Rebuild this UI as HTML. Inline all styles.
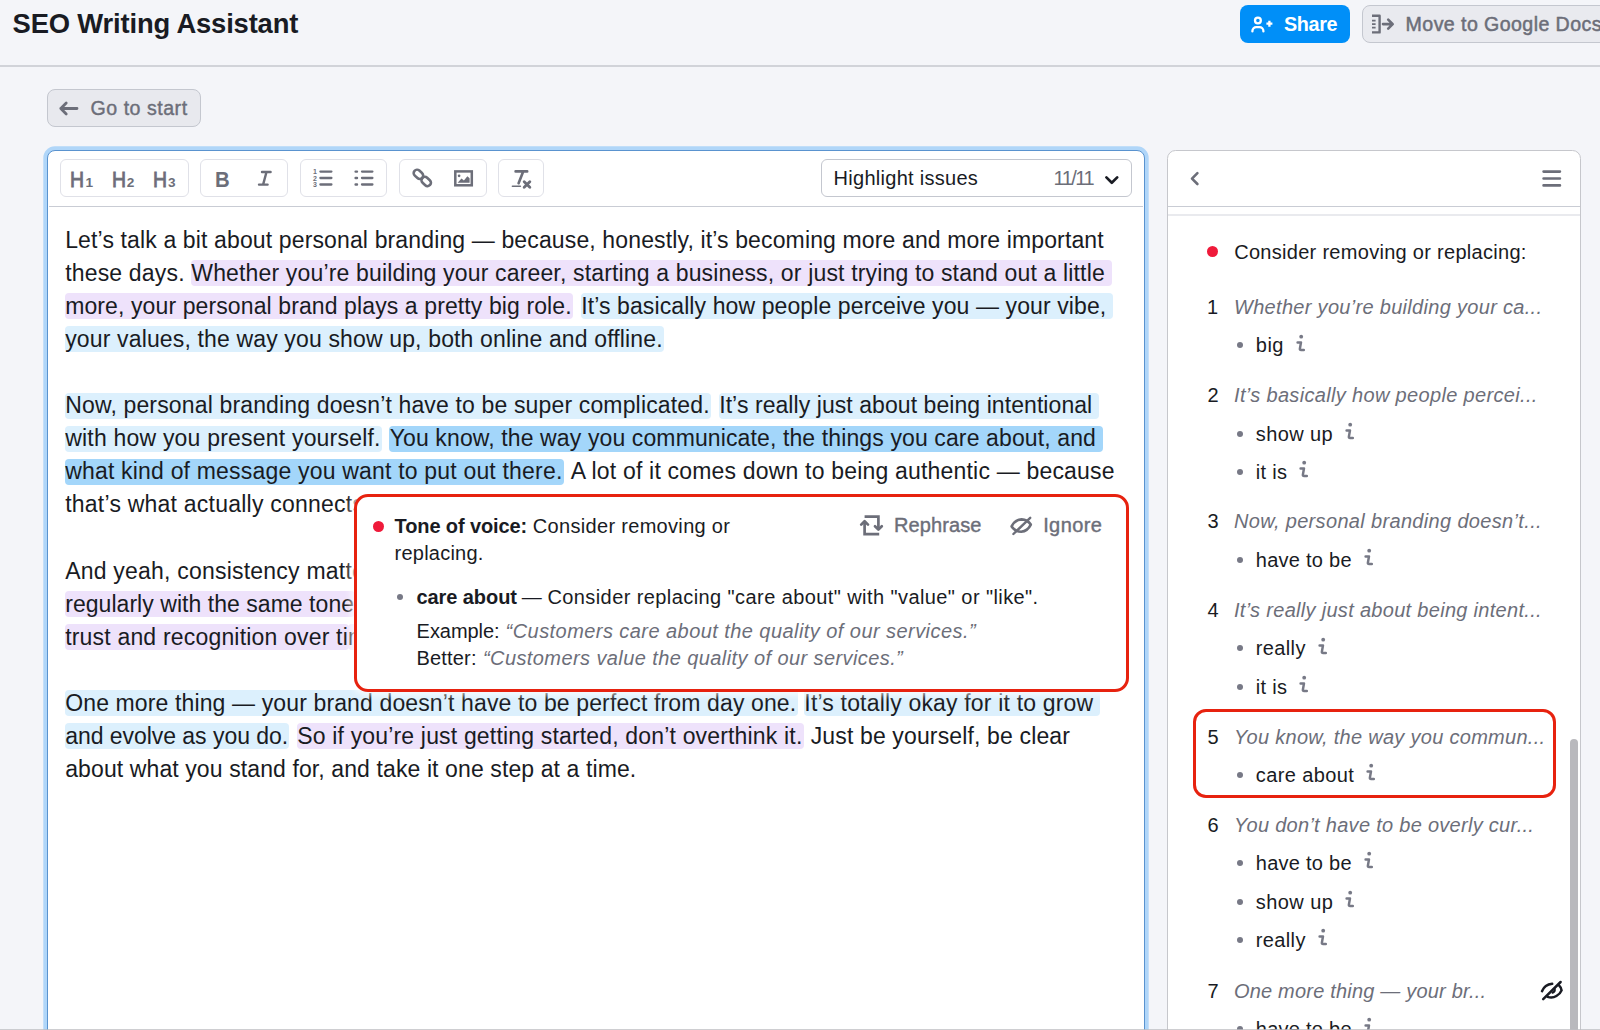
<!DOCTYPE html>
<html>
<head>
<meta charset="utf-8">
<title>SEO Writing Assistant</title>
<style>
*{box-sizing:border-box;margin:0;padding:0}
html,body{width:1600px;height:1030px;overflow:hidden}
body{background:#f4f5f9;font-family:"Liberation Sans",sans-serif;color:#191b23;position:relative}
.abs{position:absolute}
svg{position:absolute;overflow:visible}
.t{position:absolute;white-space:pre}
.g{color:#6c6e79}
.med{-webkit-text-stroke:0.5px currentColor}
#hline{left:0;top:65.4px;width:1600px;height:1.25px;background:#d1d3d9}
#share{left:1240px;top:4.7px;width:110.2px;height:38.5px;background:#008ff8;border-radius:8px}
#move{left:1361.6px;top:4.7px;width:260px;height:38.5px;background:#e9eaef;border:1.37px solid #c4c7cf;border-radius:8px}
#gostart{left:47.4px;top:89.2px;width:153.2px;height:38px;background:#e8e9ee;border:1.37px solid #c4c7cf;border-radius:8px}
#editor{left:46.8px;top:149.5px;width:1098.2px;height:900px;background:#fff;border:1.4px solid #5a93cf;border-radius:8px;box-shadow:0 0 0 3.7px #b0d6f9}
.tg{position:absolute;top:159.4px;height:37.9px;border:1.37px solid #e0e1e8;border-radius:6px;background:#fff}
#tbline{left:48.6px;top:206px;width:1094.7px;height:1.4px;background:#c9ccd4}
#panel{left:1166.8px;top:149.7px;width:414.2px;height:900px;background:#fff;border:1.37px solid #c6c7cc;border-radius:8.5px}
#pline1{left:1168.2px;top:206px;width:411.4px;height:1.4px;background:#c9ccd4}
#pline2{left:1168.2px;top:214.4px;width:411.4px;height:1.2px;background:#e9eaee}
#edtext{left:0;top:0;width:1143px;height:1030px;overflow:hidden}
.ln{position:absolute;left:65.2px;height:33px;line-height:33px;font-size:23px;white-space:pre;color:#191b23}
.ln .p,.ln .b,.ln .a{position:relative;z-index:0}
.ln .p::before,.ln .b::before,.ln .a::before{content:"";position:absolute;z-index:-1;left:-0.4px;right:-1.2px;top:0.4px;height:26.1px;border-radius:4px}
.ln .p::before{background:#eee2fb}
.ln .b::before{background:#dcf0fd}
.ln .a::before{background:#a3d6fa}
.ln .e::before{right:-7px}
#popup{left:353.8px;top:493.9px;width:775.7px;height:198.4px;background:#fff;border:3px solid #e7220f;border-radius:14px;box-shadow:0 0 7px 2.5px rgba(255,255,255,.8)}
#sel{left:1192.7px;top:709.2px;width:363px;height:89.2px;border:3px solid #e7220f;border-radius:13px}
#scroll{left:1570.2px;top:739px;width:7.8px;height:320px;background:#b9b9bd;border-radius:4px}
#bottomline{left:0;top:1028.9px;width:1600px;height:1.2px;background:rgba(190,190,194,.75)}
</style>
</head>
<body>
<div class="t" style="left:12.6px;top:8.2px;font-size:27.4px;line-height:31.48px;letter-spacing:-0.170px;font-weight:bold;">SEO Writing Assistant</div>
<div class="abs" id="hline"></div>
<div class="abs" id="share"></div>
<svg style="left:1248px;top:12px" width="28" height="24" viewBox="1248 12 28 24" fill="none" stroke="#fff" stroke-width="2.3" stroke-linecap="round" stroke-linejoin="round">
<circle cx="1257.9" cy="20.5" r="2.9"/>
<path d="M1252.4 31.4 v-0.4 a3.9 3.9 0 0 1 3.9 -3.9 h3.2 a3.9 3.9 0 0 1 3.9 3.9 v0.4"/>
<path d="M1269.4 20.7 v6 M1266.4 23.7 h6" stroke-width="2.3" stroke-linecap="butt"/>
</svg>
<div class="t" style="left:1283.9px;top:12.6px;font-size:19.8px;line-height:22.75px;letter-spacing:-0.317px;font-weight:bold;color:#fff;">Share</div>
<div class="abs" id="move"></div>
<svg style="left:1370px;top:12px" width="28" height="24" viewBox="1370 12 28 24" fill="none" stroke="#6c6e79" stroke-width="2.2" stroke-linecap="butt" stroke-linejoin="round">
<path d="M1372 15.8 h7.6 v16.6 h-7.6" stroke-width="2.4"/>
<path d="M1372 20.6 h3.6 M1372 24.1 h3.6 M1372 27.6 h3.6" stroke-width="1.9"/>
<path d="M1383 24.1 h9.2 M1388.2 19.6 l4.5 4.5 l-4.5 4.5" stroke-linecap="round" stroke-width="2.6"/>
</svg>
<div class="t g med" style="left:1405.6px;top:12.7px;font-size:19.6px;line-height:22.5px;letter-spacing:0.415px">Move to Google Docs</div>
<div class="abs" id="gostart"></div>
<svg style="left:58px;top:100px" width="22" height="16" viewBox="58 100 22 16" fill="none" stroke="#6c6e79" stroke-width="2.8" stroke-linecap="round" stroke-linejoin="round">
<path d="M60.8 108.5 h16.2 M66.2 103.1 l-5.4 5.4 l5.4 5.4"/></svg>
<div class="t" style="left:90.6px;top:96.6px;font-size:19.6px;line-height:22.52px;letter-spacing:0.501px;color:#6c6e79;-webkit-text-stroke:0.4px #6c6e79;">Go to start</div>
<div class="abs" id="editor"></div>
<div class="tg" style="left:60.0px;width:128.5px"></div>
<div class="tg" style="left:200.3px;width:87.3px"></div>
<div class="tg" style="left:299.7px;width:87.4px"></div>
<div class="tg" style="left:399.2px;width:87.5px"></div>
<div class="tg" style="left:498.3px;width:46.1px"></div>
<div class="t g" style="left:70.3px;top:166.7px;font-size:21.6px;line-height:25px;-webkit-text-stroke:0.8px #6c6e79;transform:scaleX(0.9);transform-origin:0 0">H</div>
<div class="t g" style="left:85.5px;top:174.7px;font-size:13.6px;line-height:15px;font-weight:bold">1</div>
<div class="t g" style="left:111.6px;top:166.7px;font-size:21.6px;line-height:25px;-webkit-text-stroke:0.8px #6c6e79;transform:scaleX(0.9);transform-origin:0 0">H</div>
<div class="t g" style="left:126.8px;top:174.7px;font-size:13.6px;line-height:15px;font-weight:bold">2</div>
<div class="t g" style="left:152.8px;top:166.7px;font-size:21.6px;line-height:25px;-webkit-text-stroke:0.8px #6c6e79;transform:scaleX(0.9);transform-origin:0 0">H</div>
<div class="t g" style="left:168.0px;top:174.7px;font-size:13.6px;line-height:15px;font-weight:bold">3</div>
<div class="t g" style="left:215.4px;top:166.7px;font-size:21.6px;line-height:25px;font-weight:bold;transform:scaleX(0.94);transform-origin:0 0">B</div>
<svg style="left:255px;top:168px" width="20" height="20" viewBox="255 168 20 20" fill="none" stroke="#6c6e79" stroke-width="2.4" stroke-linecap="round"><path d="M262 172 h8.6 M259 184.6 h8.6 M266.5 172 l-3.4 12.6"/></svg>
<svg style="left:311px;top:167px" width="24" height="22" viewBox="311 167 24 22" fill="none" stroke="#6c6e79" stroke-width="2.3" stroke-linecap="round"><path d="M320.4 171.6 h11 M320.4 178 h11 M320.4 184.5 h11"/></svg>
<div class="t g" style="left:313px;top:167.9px;font-size:7px;line-height:8px;font-weight:bold">1</div>
<div class="t g" style="left:313px;top:174.5px;font-size:7px;line-height:8px;font-weight:bold">2</div>
<div class="t g" style="left:313px;top:181.0px;font-size:7px;line-height:8px;font-weight:bold">3</div>
<svg style="left:352px;top:167px" width="24" height="22" viewBox="352 167 24 22" fill="none" stroke="#6c6e79" stroke-width="2.3" stroke-linecap="round"><path d="M362 171.6 h10.4 M362 178 h10.4 M362 184.5 h10.4"/><path d="M355.6 171.6 h1.4 M355.6 178 h1.4 M355.6 184.5 h1.4" stroke-width="2.4"/></svg>
<svg style="left:410px;top:167px" width="24" height="22" viewBox="410 167 24 22" fill="none" stroke="#6c6e79" stroke-width="2.6" stroke-linecap="round" stroke-linejoin="round">
<rect x="413.2" y="170.9" width="10.4" height="6.8" rx="3.4" transform="rotate(42 418.4 174.3)"/><rect x="421" y="178.1" width="10.4" height="6.8" rx="3.4" transform="rotate(42 426.2 181.5)"/></svg>
<svg style="left:452px;top:168px" width="24" height="22" viewBox="452 168 24 22" fill="none" stroke="#6c6e79" stroke-width="2.5" stroke-linejoin="miter">
<rect x="455.3" y="171.4" width="16.5" height="13.9"/><circle cx="459.1" cy="175.8" r="1.35" fill="#6c6e79" stroke="none"/><path d="M457.6 182.8 L461.5 178.6 L463.9 180.6 L467.4 176.2 L469.6 178.2 V182.8 Z" fill="#6c6e79" stroke="none"/></svg>
<svg style="left:510px;top:168px" width="24" height="22" viewBox="510 168 24 22" fill="none" stroke="#6c6e79" stroke-width="2.6" stroke-linecap="round">
<path d="M515.6 171.4 h11.6 M523.2 171.6 l-4.6 11.6"/><path d="M512.4 186.3 h8" stroke-width="1.6"/><path d="M524.2 181.8 l5.6 5.4 M529.8 181.8 l-5.6 5.4" stroke-width="2.9"/></svg>
<div class="tg" style="left:821px;width:310.6px;border-color:#c4c7cf"></div>
<div class="t" style="left:833.6px;top:166.9px;font-size:20px;line-height:22.98px;letter-spacing:0.276px;">Highlight issues</div>
<div class="t" style="left:1053.6px;top:166.9px;font-size:20px;line-height:22.98px;letter-spacing:-1.519px;color:#6c6e79;">11/11</div>
<svg style="left:1103px;top:173px" width="18" height="14" viewBox="1103 173 18 14" fill="none" stroke="#191b23" stroke-width="2.7" stroke-linecap="round" stroke-linejoin="round"><path d="M1106.4 177.4 l5.4 5.4 l5.4 -5.4"/></svg>
<div class="abs" id="tbline"></div>
<div class="abs" id="panel"></div>
<div class="abs" id="pline1"></div><div class="abs" id="pline2"></div>
<svg style="left:1188px;top:170px" width="14" height="18" viewBox="1188 170 14 18" fill="none" stroke="#6c6e79" stroke-width="2.6" stroke-linecap="round" stroke-linejoin="round"><path d="M1197.4 173.2 l-5.4 5.4 l5.4 5.4"/></svg>
<svg style="left:1540px;top:168px" width="24" height="22" viewBox="1540 168 24 22" fill="none" stroke="#6c6e79" stroke-width="2.7" stroke-linecap="round"><path d="M1543.6 171.6 h16.3 M1543.6 178.5 h16.3 M1543.6 185.4 h16.3"/></svg>
<div class="abs" id="edtext">
<div class="ln" style="top:224.0px"><span style="letter-spacing:0.134px">Let’s talk a bit about personal branding — because, honestly, it’s becoming more and more important</span></div>
<div class="ln" style="top:257.0px"><span style="letter-spacing:0.172px">these days. </span><span class="p e" style="letter-spacing:0.158px">Whether you’re building your career, starting a business, or just trying to stand out a little</span></div>
<div class="ln" style="top:290.0px"><span class="p" style="letter-spacing:0.107px">more, your personal brand plays a pretty big role.</span><span style="letter-spacing:3.109px"> </span><span class="b e" style="letter-spacing:0.102px">It’s basically how people perceive you — your vibe,</span></div>
<div class="ln" style="top:323.0px"><span class="b" style="letter-spacing:0.148px">your values, the way you show up, both online and offline.</span></div>
<div class="ln" style="top:389.3px"><span class="b" style="letter-spacing:0.151px">Now, personal branding doesn’t have to be super complicated.</span><span style="letter-spacing:3.109px"> </span><span class="b e" style="letter-spacing:0.068px">It’s really just about being intentional</span></div>
<div class="ln" style="top:422.3px"><span class="b" style="letter-spacing:0.204px">with how you present yourself.</span><span style="letter-spacing:2.609px"> </span><span class="a e" style="letter-spacing:0.119px">You know, the way you communicate, the things you care about, and</span></div>
<div class="ln" style="top:455.3px"><span class="a" style="letter-spacing:0.189px">what kind of message you want to put out there.</span><span style="letter-spacing:1.809px"> </span><span style="letter-spacing:0.188px">A lot of it comes down to being authentic — because</span></div>
<div class="ln" style="top:488.3px"><span style="letter-spacing:0.226px">that’s what actually connect</span><span style="letter-spacing:0.140px">s with people.</span></div>
<div class="ln" style="top:554.7px"><span style="letter-spacing:0.213px">And yeah, consistency matt</span><span style="letter-spacing:0.140px">ers too. Showing up online</span></div>
<div class="ln" style="top:587.7px"><span class="p" style="letter-spacing:0.044px">regularly with the same tone</span><span class="p" style="letter-spacing:0.140px"> and message helps build</span></div>
<div class="ln" style="top:620.7px"><span class="p" style="letter-spacing:0.185px">trust and recognition over ti</span><span class="p" style="letter-spacing:0.140px">me.</span></div>
<div class="ln" style="top:687.0px"><span class="b" style="letter-spacing:0.129px">One more thing — your brand doesn’t have to be perfect from day one.</span><span style="letter-spacing:1.609px"> </span><span class="b e" style="letter-spacing:0.176px">It’s totally okay for it to grow</span></div>
<div class="ln" style="top:720.0px"><span class="b" style="letter-spacing:-0.042px">and evolve as you do.</span><span style="letter-spacing:2.709px"> </span><span class="p" style="letter-spacing:0.171px">So if you’re just getting started, don’t overthink it.</span><span style="letter-spacing:1.809px"> </span><span style="letter-spacing:0.143px">Just be yourself, be clear</span></div>
<div class="ln" style="top:753.0px"><span style="letter-spacing:0.105px">about what you stand for, and take it one step at a time.</span></div>
</div>
<div class="abs" style="left:1168.4px;top:216px;width:410.5px;height:814px;overflow:hidden"></div>
<div class="abs" style="left:1206.6px;top:246.3px;width:11.2px;height:11.2px;border-radius:50%;background:#ef1a3a"></div>
<div class="t" style="left:1234.2px;top:240.7px;font-size:20px;line-height:22.98px;letter-spacing:0.291px;">Consider removing or replacing:</div>
<div class="t" style="left:1207.0px;top:296.0px;font-size:20px;line-height:22.98px;letter-spacing:0.000px;">1</div>
<div class="t" style="left:1234.0px;top:296.0px;font-size:20px;line-height:22.98px;letter-spacing:0.305px;font-style:italic;color:#6c6e79;">Whether you’re building your ca...</div>
<div class="abs" style="left:1236.7px;top:342.2px;width:6.2px;height:6.2px;border-radius:50%;background:#777986"></div>
<div class="t" style="left:1255.8px;top:334.4px;font-size:20px;line-height:22.98px;letter-spacing:0.466px;">big</div>
<svg style="left:1295.7px;top:333.5px" width="12" height="20" viewBox="0 0 12 20" fill="none" stroke="#777986" stroke-width="2.5" stroke-linecap="round" stroke-linejoin="round"><circle cx="5.2" cy="2.7" r="1.9" fill="#777986" stroke="none"/><path d="M1.6 8.4 H5 L3.9 14.6 Q3.7 16 5.1 16 H7.8"/></svg>
<div class="t" style="left:1207.6px;top:384.3px;font-size:20px;line-height:22.98px;letter-spacing:0.000px;">2</div>
<div class="t" style="left:1234.0px;top:384.3px;font-size:20px;line-height:22.98px;letter-spacing:0.334px;font-style:italic;color:#6c6e79;">It’s basically how people percei...</div>
<div class="abs" style="left:1236.7px;top:430.5px;width:6.2px;height:6.2px;border-radius:50%;background:#777986"></div>
<div class="t" style="left:1255.8px;top:422.7px;font-size:20px;line-height:22.98px;letter-spacing:0.400px;">show up</div>
<svg style="left:1344.9px;top:421.8px" width="12" height="20" viewBox="0 0 12 20" fill="none" stroke="#777986" stroke-width="2.5" stroke-linecap="round" stroke-linejoin="round"><circle cx="5.2" cy="2.7" r="1.9" fill="#777986" stroke="none"/><path d="M1.6 8.4 H5 L3.9 14.6 Q3.7 16 5.1 16 H7.8"/></svg>
<div class="abs" style="left:1236.7px;top:468.9px;width:6.2px;height:6.2px;border-radius:50%;background:#777986"></div>
<div class="t" style="left:1255.8px;top:461.1px;font-size:20px;line-height:22.98px;letter-spacing:0.320px;">it is</div>
<svg style="left:1299.2px;top:460.2px" width="12" height="20" viewBox="0 0 12 20" fill="none" stroke="#777986" stroke-width="2.5" stroke-linecap="round" stroke-linejoin="round"><circle cx="5.2" cy="2.7" r="1.9" fill="#777986" stroke="none"/><path d="M1.6 8.4 H5 L3.9 14.6 Q3.7 16 5.1 16 H7.8"/></svg>
<div class="t" style="left:1207.6px;top:510.4px;font-size:20px;line-height:22.98px;letter-spacing:0.000px;">3</div>
<div class="t" style="left:1234.0px;top:510.4px;font-size:20px;line-height:22.98px;letter-spacing:0.335px;font-style:italic;color:#6c6e79;">Now, personal branding doesn’t...</div>
<div class="abs" style="left:1236.7px;top:556.6px;width:6.2px;height:6.2px;border-radius:50%;background:#777986"></div>
<div class="t" style="left:1255.8px;top:548.8px;font-size:20px;line-height:22.98px;letter-spacing:0.258px;">have to be</div>
<svg style="left:1363.6px;top:547.9px" width="12" height="20" viewBox="0 0 12 20" fill="none" stroke="#777986" stroke-width="2.5" stroke-linecap="round" stroke-linejoin="round"><circle cx="5.2" cy="2.7" r="1.9" fill="#777986" stroke="none"/><path d="M1.6 8.4 H5 L3.9 14.6 Q3.7 16 5.1 16 H7.8"/></svg>
<div class="t" style="left:1207.6px;top:599.0px;font-size:20px;line-height:22.98px;letter-spacing:0.000px;">4</div>
<div class="t" style="left:1234.0px;top:599.0px;font-size:20px;line-height:22.98px;letter-spacing:0.300px;font-style:italic;color:#6c6e79;">It’s really just about being intent...</div>
<div class="abs" style="left:1236.7px;top:645.2px;width:6.2px;height:6.2px;border-radius:50%;background:#777986"></div>
<div class="t" style="left:1255.8px;top:637.4px;font-size:20px;line-height:22.98px;letter-spacing:0.367px;">really</div>
<svg style="left:1317.6px;top:636.5px" width="12" height="20" viewBox="0 0 12 20" fill="none" stroke="#777986" stroke-width="2.5" stroke-linecap="round" stroke-linejoin="round"><circle cx="5.2" cy="2.7" r="1.9" fill="#777986" stroke="none"/><path d="M1.6 8.4 H5 L3.9 14.6 Q3.7 16 5.1 16 H7.8"/></svg>
<div class="abs" style="left:1236.7px;top:683.6px;width:6.2px;height:6.2px;border-radius:50%;background:#777986"></div>
<div class="t" style="left:1255.8px;top:675.8px;font-size:20px;line-height:22.98px;letter-spacing:0.320px;">it is</div>
<svg style="left:1299.2px;top:674.9px" width="12" height="20" viewBox="0 0 12 20" fill="none" stroke="#777986" stroke-width="2.5" stroke-linecap="round" stroke-linejoin="round"><circle cx="5.2" cy="2.7" r="1.9" fill="#777986" stroke="none"/><path d="M1.6 8.4 H5 L3.9 14.6 Q3.7 16 5.1 16 H7.8"/></svg>
<div class="t" style="left:1207.6px;top:725.7px;font-size:20px;line-height:22.98px;letter-spacing:0.000px;">5</div>
<div class="t" style="left:1234.0px;top:725.7px;font-size:20px;line-height:22.98px;letter-spacing:0.291px;font-style:italic;color:#6c6e79;">You know, the way you commun...</div>
<div class="abs" style="left:1236.7px;top:771.9px;width:6.2px;height:6.2px;border-radius:50%;background:#777986"></div>
<div class="t" style="left:1255.8px;top:764.1px;font-size:20px;line-height:22.98px;letter-spacing:0.378px;">care about</div>
<svg style="left:1365.9px;top:763.2px" width="12" height="20" viewBox="0 0 12 20" fill="none" stroke="#777986" stroke-width="2.5" stroke-linecap="round" stroke-linejoin="round"><circle cx="5.2" cy="2.7" r="1.9" fill="#777986" stroke="none"/><path d="M1.6 8.4 H5 L3.9 14.6 Q3.7 16 5.1 16 H7.8"/></svg>
<div class="t" style="left:1207.6px;top:813.9px;font-size:20px;line-height:22.98px;letter-spacing:0.000px;">6</div>
<div class="t" style="left:1234.0px;top:813.9px;font-size:20px;line-height:22.98px;letter-spacing:0.284px;font-style:italic;color:#6c6e79;">You don’t have to be overly cur...</div>
<div class="abs" style="left:1236.7px;top:860.1px;width:6.2px;height:6.2px;border-radius:50%;background:#777986"></div>
<div class="t" style="left:1255.8px;top:852.3px;font-size:20px;line-height:22.98px;letter-spacing:0.258px;">have to be</div>
<svg style="left:1363.6px;top:851.4px" width="12" height="20" viewBox="0 0 12 20" fill="none" stroke="#777986" stroke-width="2.5" stroke-linecap="round" stroke-linejoin="round"><circle cx="5.2" cy="2.7" r="1.9" fill="#777986" stroke="none"/><path d="M1.6 8.4 H5 L3.9 14.6 Q3.7 16 5.1 16 H7.8"/></svg>
<div class="abs" style="left:1236.7px;top:898.5px;width:6.2px;height:6.2px;border-radius:50%;background:#777986"></div>
<div class="t" style="left:1255.8px;top:890.7px;font-size:20px;line-height:22.98px;letter-spacing:0.443px;">show up</div>
<svg style="left:1345.2px;top:889.8px" width="12" height="20" viewBox="0 0 12 20" fill="none" stroke="#777986" stroke-width="2.5" stroke-linecap="round" stroke-linejoin="round"><circle cx="5.2" cy="2.7" r="1.9" fill="#777986" stroke="none"/><path d="M1.6 8.4 H5 L3.9 14.6 Q3.7 16 5.1 16 H7.8"/></svg>
<div class="abs" style="left:1236.7px;top:936.9px;width:6.2px;height:6.2px;border-radius:50%;background:#777986"></div>
<div class="t" style="left:1255.8px;top:929.1px;font-size:20px;line-height:22.98px;letter-spacing:0.367px;">really</div>
<svg style="left:1317.6px;top:928.2px" width="12" height="20" viewBox="0 0 12 20" fill="none" stroke="#777986" stroke-width="2.5" stroke-linecap="round" stroke-linejoin="round"><circle cx="5.2" cy="2.7" r="1.9" fill="#777986" stroke="none"/><path d="M1.6 8.4 H5 L3.9 14.6 Q3.7 16 5.1 16 H7.8"/></svg>
<div class="t" style="left:1207.6px;top:979.7px;font-size:20px;line-height:22.98px;letter-spacing:0.000px;">7</div>
<div class="t" style="left:1234.0px;top:979.7px;font-size:20px;line-height:22.98px;letter-spacing:0.191px;font-style:italic;color:#6c6e79;">One more thing — your br...</div>
<div class="abs" style="left:1236.7px;top:1025.9px;width:6.2px;height:6.2px;border-radius:50%;background:#777986"></div>
<div class="t" style="left:1255.8px;top:1018.1px;font-size:20px;line-height:22.98px;letter-spacing:0.258px;">have to be</div>
<svg style="left:1363.6px;top:1017.2px" width="12" height="20" viewBox="0 0 12 20" fill="none" stroke="#777986" stroke-width="2.5" stroke-linecap="round" stroke-linejoin="round"><circle cx="5.2" cy="2.7" r="1.9" fill="#777986" stroke="none"/><path d="M1.6 8.4 H5 L3.9 14.6 Q3.7 16 5.1 16 H7.8"/></svg>
<div class="abs" id="sel"></div>
<div class="abs" id="scroll"></div>
<svg style="left:1538px;top:978px" width="28" height="26" viewBox="1538 978 28 26" fill="none" stroke="#191b23" stroke-width="2.5" stroke-linecap="round" stroke-linejoin="round">
<path d="M1542 991.2 Q1544.6 984.6 1552.2 983.8"/>
<path d="M1547.6 996.8 Q1552.2 998.6 1556.4 996 Q1560.4 993.6 1561.6 990.4 Q1561.4 987.6 1559 985.4"/>
<path d="M1554.6 988.6 Q1555.6 991.6 1552.6 992.8" stroke-width="2"/>
<path d="M1560.6 982 L1543.2 999.2"/></svg>
<div class="abs" id="popup"></div>
<div class="abs" style="left:372.5px;top:520.7px;width:11.2px;height:11.2px;border-radius:50%;background:#ef1a3a"></div>
<div class="t" style="left:394.6px;top:514.5px;font-size:20px;line-height:22.98px;letter-spacing:-0.114px;font-weight:bold;">Tone of voice:</div>
<div class="t" style="left:532.8px;top:514.5px;font-size:20px;line-height:22.98px;letter-spacing:0.315px;">Consider removing or</div>
<div class="t" style="left:394.6px;top:541.9px;font-size:20px;line-height:22.98px;letter-spacing:0.228px;">replacing.</div>
<svg style="left:858px;top:513px" width="28" height="26" viewBox="858 513 28 26" fill="none" stroke="#6c6e79" stroke-width="2.7" stroke-linecap="butt" stroke-linejoin="miter">
<path d="M864.6 516.6 H878.4 V529"/><path d="M875 526.2 L878.4 529.6 L881.8 526.2" stroke-linecap="round" stroke-linejoin="round"/>
<path d="M879.2 534.2 H864.6 V521.8"/><path d="M861.2 524.6 L864.6 521.2 L868 524.6" stroke-linecap="round" stroke-linejoin="round"/></svg>
<div class="t" style="left:894.0px;top:514.1px;font-size:20px;line-height:22.98px;letter-spacing:0.098px;color:#6c6e79;-webkit-text-stroke:0.4px #6c6e79;">Rephrase</div>
<svg style="left:1008px;top:513px" width="28" height="26" viewBox="1008 513 28 26" fill="none" stroke="#6c6e79" stroke-width="2.4" stroke-linecap="round" stroke-linejoin="round">
<path d="M1011.6 526.4 Q1015 519.6 1021.6 519.4 Q1027.4 519.6 1030.8 524.6 Q1027.6 531.2 1021.2 531.8 Q1015.4 531.8 1011.6 526.4 Z" stroke-width="2.6"/>
<path d="M1030.2 517.8 L1013.4 534"/></svg>
<div class="t" style="left:1043.2px;top:514.1px;font-size:20px;line-height:22.98px;letter-spacing:0.380px;color:#6c6e79;-webkit-text-stroke:0.4px #6c6e79;">Ignore</div>
<div class="abs" style="left:397px;top:594px;width:6px;height:6px;border-radius:50%;background:#777986"></div>
<div class="t" style="left:416.4px;top:586.2px;font-size:20px;line-height:22.98px;letter-spacing:-0.066px;font-weight:bold;">care about</div>
<div class="t" style="left:521.8px;top:586.2px;font-size:20px;line-height:22.98px;letter-spacing:0.000px;">—</div>
<div class="t" style="left:547.4px;top:586.2px;font-size:20px;line-height:22.98px;letter-spacing:0.415px;">Consider replacing "care about" with "value" or "like".</div>
<div class="t" style="left:416.6px;top:619.5px;font-size:20px;line-height:22.98px;letter-spacing:-0.047px;">Example:</div>
<div class="t" style="left:505.6px;top:619.5px;font-size:20px;line-height:22.98px;letter-spacing:0.440px;font-style:italic;color:#6c6e79;">“Customers care about the quality of our services.”</div>
<div class="t" style="left:416.6px;top:646.5px;font-size:20px;line-height:22.98px;letter-spacing:0.154px;">Better:</div>
<div class="t" style="left:483.0px;top:646.5px;font-size:20px;line-height:22.98px;letter-spacing:0.411px;font-style:italic;color:#6c6e79;">“Customers value the quality of our services.”</div>
<div class="abs" id="bottomline"></div>
</body>
</html>
